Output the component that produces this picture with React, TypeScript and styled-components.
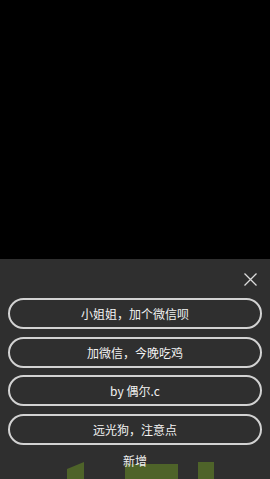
import React from 'react';
import styled, { createGlobalStyle } from 'styled-components';

const Global = createGlobalStyle`
  html, body {
    margin: 0;
    padding: 0;
    background: #000;
  }
  body {
    font-family: "Noto Sans CJK SC", "Liberation Sans", sans-serif;
  }
`;

const Page = styled.div`
  display: flex;
  flex-direction: column;
  width: 270px;
  height: 479px;
  overflow: hidden;
  background: #000;
`;

const Screen = styled.div`
  flex: 1;
  background: #000;
`;

const Sheet = styled.div`
  height: 220px;
  background: #2f2f2f;
  display: flex;
  flex-direction: column;
  box-sizing: border-box;
  padding: 0 8px;
`;

const CloseRow = styled.div`
  height: 39px;
  display: flex;
  justify-content: flex-end;
  align-items: flex-start;
`;

const CloseButton = styled.button`
  margin: 14px 5px 0 0;
  padding: 0;
  width: 13px;
  height: 13px;
  border: none;
  background: none;
  display: flex;
`;

const List = styled.div`
  display: flex;
  flex-direction: column;
  gap: 7.7px;
`;

const Option = styled.button`
  box-sizing: border-box;
  width: 100%;
  height: 31px;
  border: 2px solid #d2d2d2;
  border-radius: 16px;
  background: transparent;
  color: #f2f2f2;
  font-family: "Noto Sans CJK SC", "Liberation Sans", sans-serif;
  font-size: 12px;
  padding: 0;
`;

const Footer = styled.div`
  position: relative;
  flex: 1;
  display: flex;
  justify-content: center;
`;

const AddLabel = styled.span`
  position: relative;
  z-index: 1;
  margin-top: 8px;
  color: #eeeeee;
  font-size: 12px;
  line-height: 16px;
`;

const Backdrop = styled.svg`
  position: absolute;
  left: -8px;
  bottom: 0;
`;

const options = ['小姐姐，加个微信呗', '加微信，今晚吃鸡', 'by 偶尔.c', '远光狗，注意点'];

function App() {
  return (
    <Page>
      <Global />
      <Screen />
      <Sheet>
        <CloseRow>
          <CloseButton aria-label="关闭">
            <svg width="13" height="13" viewBox="0 0 13 13">
              <path d="M0.5 0.5 L12.5 12.5 M12.5 0.5 L0.5 12.5" stroke="#dcdcdc" strokeWidth="1.3" />
            </svg>
          </CloseButton>
        </CloseRow>
        <List>
          {options.map((o) => (
            <Option key={o}>{o}</Option>
          ))}
        </List>
        <Footer>
          <Backdrop width="270" height="17" viewBox="0 0 270 17">
            <polygon points="67,7 84,0 84,17 67,17" fill="#4e6329" />
            <rect x="125" y="2" width="53" height="15" fill="#4e6329" />
            <rect x="198" y="0" width="16" height="17" fill="#4e6329" />
          </Backdrop>
          <AddLabel>新增</AddLabel>
        </Footer>
      </Sheet>
    </Page>
  );
}

export default App;
